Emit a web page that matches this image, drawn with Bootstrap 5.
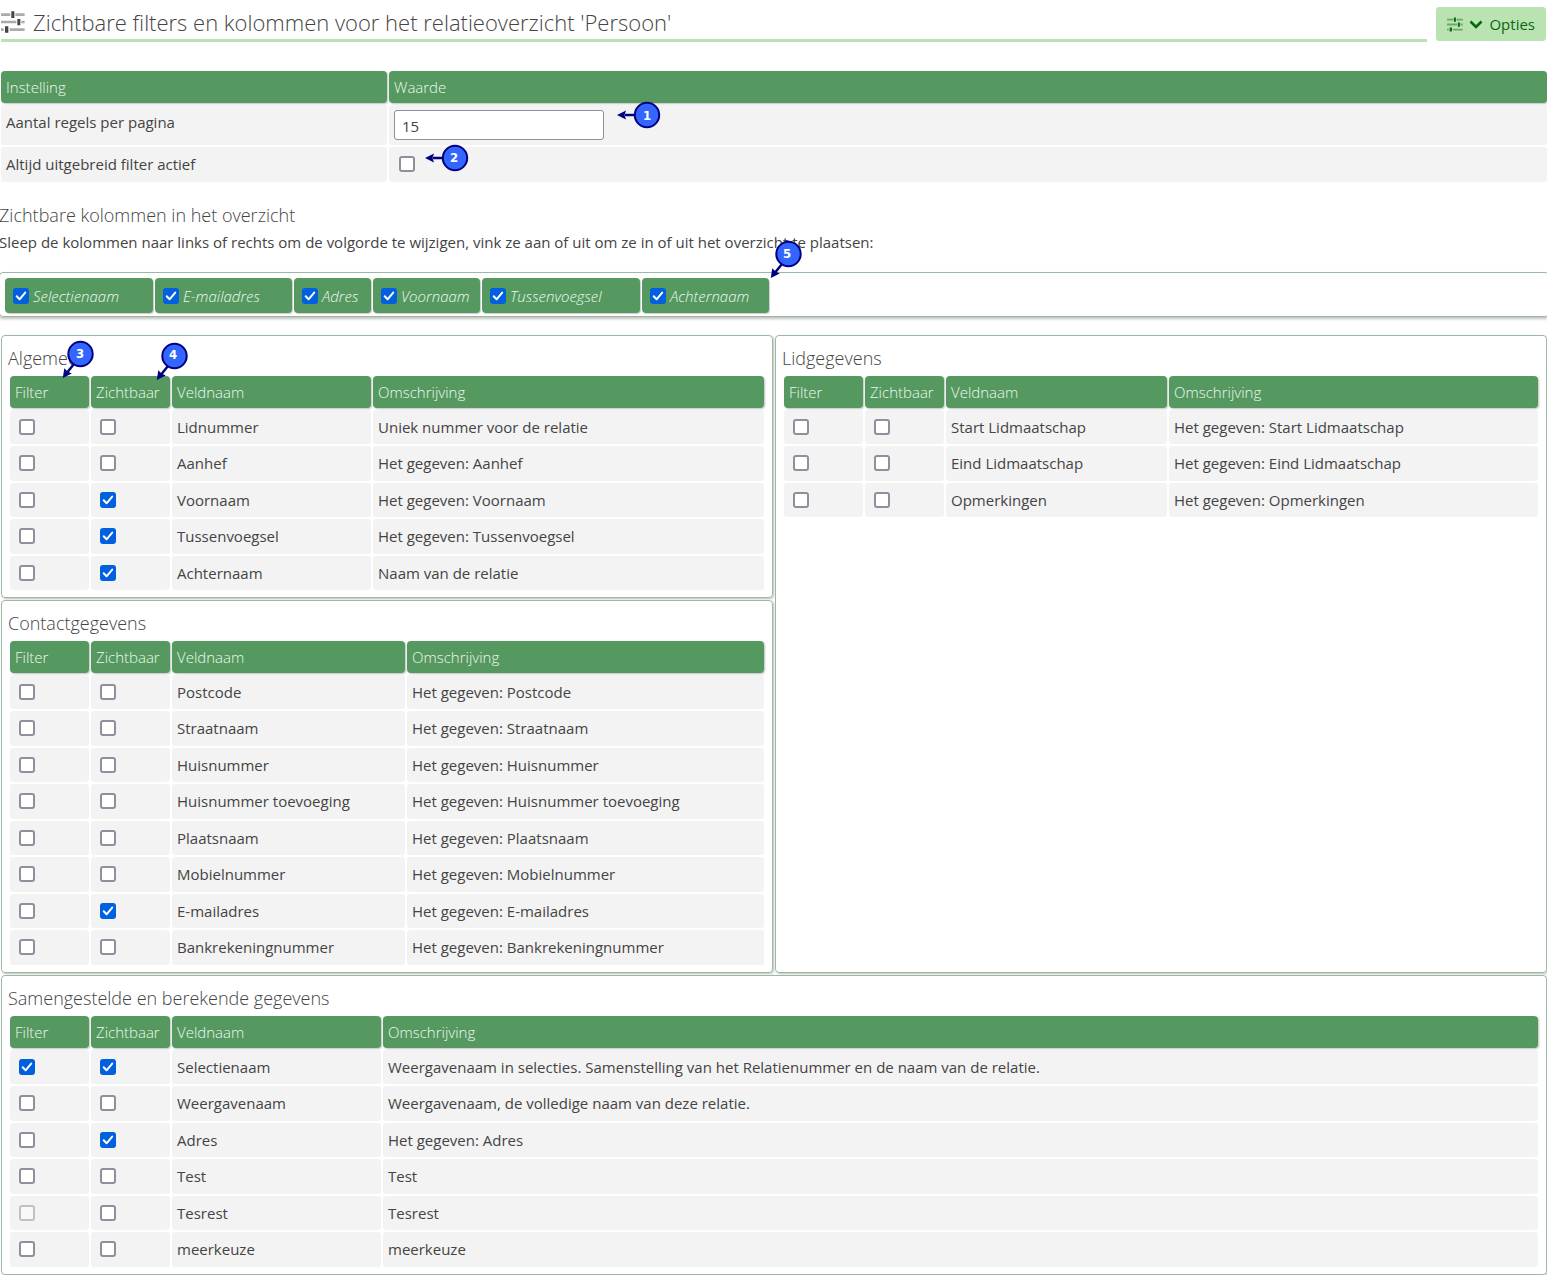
<!DOCTYPE html>
<html lang="nl">
<head>
<meta charset="utf-8">
<meta name="viewport" content="width=device-width, initial-scale=1">
<title>Zichtbare filters en kolommen</title>
<link href="https://cdn.jsdelivr.net/npm/bootstrap@5.3.0/dist/css/bootstrap.min.css" rel="stylesheet">
<style>
body{font:400 15px/20px "Open Sans","Noto Sans",sans-serif;color:#444;background:#fff;overflow-x:hidden}
.page{padding-left:1px}
.bleed{margin-left:-2px;margin-right:-2px}

/* page header */
.page-head{gap:9px;margin-bottom:27px;padding-right:1px}
.page-title{font-size:22px;line-height:30px;font-weight:300;color:#444;padding:7px 0 2px;border-bottom:3px solid #b9e4b2;gap:8px}
.btn-options{--bs-btn-bg:#b9e4b2;--bs-btn-color:#0b6410;--bs-btn-border-color:#b9e4b2;--bs-btn-hover-bg:#a8d8a0;--bs-btn-hover-color:#0b6410;--bs-btn-hover-border-color:#a8d8a0;--bs-btn-border-radius:3px;--bs-btn-font-size:15px;--bs-btn-line-height:20px;--bs-btn-padding-x:10px;--bs-btn-padding-y:6px;margin-top:7px;gap:6px}

/* grids */
.grid-table{width:100%;border-collapse:separate;border-spacing:2px;table-layout:fixed}
.grid-table th{background:#559960;color:#eef8ee;font-weight:300;padding:6px 5px;border-radius:4px;box-shadow:1px 1px 2px rgba(0,0,0,.25);position:relative}
.grid-table td{background:#f3f3f3;padding:7px 5px;border-radius:3px;height:34px;vertical-align:top;position:relative}
.grid-table tbody tr:nth-child(even) td{height:35px}
.grid-table .form-check-input{display:block;margin:2px 0 0 4px}
.grid-table td.input-cell{padding:5px}
.grid-table .form-check-input.wide-offset{margin-left:5px}
.col-setting{width:386px}
.col-check{width:79px}
.col-name-s{width:199px}
.col-name-m{width:209px}
.col-name-r{width:221px}
.col-name-l{width:233px}
.form-control{width:210px;height:30px;font-size:15px;line-height:20px;color:#444;border:1px solid #8f8f9d;border-radius:3px;padding:5px 7px 3px}

.form-check-input{width:16px;height:16px;margin:0;border:2px solid #8f8f9d;background-color:#fff;flex:none}
.form-check-input[type=checkbox]{border-radius:3px}
.form-check-input:checked{border-color:#0060df;background-color:#0060df;background-size:16px 16px;background-origin:border-box;background-image:url("data:image/svg+xml,%3csvg xmlns='http://www.w3.org/2000/svg' viewBox='0 0 16 16'%3e%3cpath fill='none' stroke='%23fff' stroke-width='2' stroke-linecap='round' stroke-linejoin='round' d='M3.7 8.3 6.6 11.3 12.2 4.6'/%3e%3c/svg%3e")}

/* column order bar */
.section-title{font-size:18px;line-height:24px;font-weight:300;color:#444;margin:19px 0 5px -2px}
.section-text{margin:0 0 20px -2px}
.order-bar{gap:2px;border:1px solid #9db8a2;border-radius:4px;padding:5px 5px 3px;box-shadow:0 2px 3px rgba(0,0,0,.25);margin-bottom:18px}
.order-item{height:35px;gap:4px;padding:0 8px;background:#559960;color:#eef8ee;font-style:italic;font-weight:300;border-radius:4px;box-shadow:1px 1px 1px rgba(0,0,0,.2);cursor:move}
.order-item label{padding-top:1px}
.w-chip-148{width:148px}
.w-chip-137{width:137px}
.w-chip-77{width:77px}
.w-chip-107{width:107px}
.w-chip-158{width:158px}
.w-chip-127{width:127px}

/* field groups */
.groups,.group-col{gap:2px}
.group-box{border:1px solid #9db8a2;border-radius:4px;padding:10px 6px 5px;box-shadow:1px 1px 2px rgba(0,0,0,.25)}
.group-title{font-size:18px;line-height:24px;font-weight:300;color:#444;margin:0 0 4px}

/* numbered callouts */
.callout{position:absolute;z-index:3;pointer-events:none}
.callout text{font:700 13px "DejaVu Sans Condensed","DejaVu Sans",sans-serif;fill:#fff;text-anchor:middle}
.callout-1{left:228px;top:-4px}
.callout-2{left:36px;top:-3px}
.callout-3{left:52px;top:-36px}
.callout-4{left:65px;top:-34px}
.callout-5{left:128px;top:-38px}
</style>
<script src="https://cdn.jsdelivr.net/npm/bootstrap@5.3.0/dist/js/bootstrap.bundle.min.js"></script>
</head>
<body>
<svg width="0" height="0" class="position-absolute" aria-hidden="true">
  <symbol id="sliders" viewBox="3 32 72 66">
    <path opacity=".45" fill="currentColor" d="M3 39h28v8H3zM46 39h28v8H46zM3 61h46v8H3zM64 61h10v8H64zM3 84h8v8H3zM29 84h45v8H29z"/>
    <path fill="currentColor" d="M34 33h9v20h-9zM52 56h9v19h-9zM15 78h10v19H15z"/>
  </symbol>
  <symbol id="pin-left" viewBox="0 0 44 28">
    <path d="M8 14H18" stroke="#000080" stroke-width="2.5"/><path fill="#000080" d="M0 14 9 9.5 7.500 14 9 18.500z"/>
    <circle cx="30" cy="14" r="12.200" fill="#36f" stroke="#000080" stroke-width="2"/>
  </symbol>
  <symbol id="pin-down" viewBox="0 0 34 40">
    <path d="M5.500 32 12 24" stroke="#000080" stroke-width="2.500"/><path fill="#000080" d="M.8 38 2.300 28.300 5.500 31.500 9.800 33.500z"/>
    <circle cx="18.500" cy="14" r="12.200" fill="#36f" stroke="#000080" stroke-width="2"/>
  </symbol>
</svg>

<main class="page">
  <header class="page-head d-flex align-items-start">
    <h1 class="page-title d-flex align-items-center flex-fill mb-0">
      <svg width="24" height="22" aria-hidden="true"><use href="#sliders"/></svg>
      <span>Zichtbare filters en kolommen voor het relatieoverzicht 'Persoon'</span>
    </h1>
    <button type="button" class="btn btn-options d-flex align-items-center">
      <svg width="16" height="15" aria-hidden="true"><use href="#sliders"/></svg>
      <svg width="14" height="9" viewBox="0 0 14 9" aria-hidden="true"><path d="M1.500 1.500 7 7l5.500-5.500" fill="none" stroke="currentColor" stroke-width="2.600"/></svg>
      <span>Opties</span>
    </button>
  </header>

  <div class="bleed">
    <table class="grid-table">
      <colgroup><col class="col-setting"><col></colgroup>
      <thead><tr><th>Instelling</th><th>Waarde</th></tr></thead>
      <tbody>
        <tr>
          <td><label for="rows">Aantal regels per pagina</label></td>
          <td class="input-cell"><input id="rows" type="text" class="form-control" value="15">
            <svg class="callout callout-1" width="44" height="28"><use href="#pin-left"/><text x="30" y="19">1</text></svg></td>
        </tr>
        <tr>
          <td><label for="ext">Altijd uitgebreid filter actief</label></td>
          <td><input id="ext" type="checkbox" class="form-check-input wide-offset">
            <svg class="callout callout-2" width="44" height="28"><use href="#pin-left"/><text x="29" y="18">2</text></svg></td>
        </tr>
      </tbody>
    </table>
  </div>

  <h2 class="section-title">Zichtbare kolommen in het overzicht</h2>
  <p class="section-text">Sleep de kolommen naar links of rechts om de volgorde te wijzigen, vink ze aan of uit om ze in of uit het overzicht te plaatsen:</p>

  <div class="order-bar bleed d-flex">
    <div class="order-item w-chip-148 d-flex align-items-center"><input class="form-check-input" type="checkbox" id="o1" checked><label for="o1">Selectienaam</label></div>
    <div class="order-item w-chip-137 d-flex align-items-center"><input class="form-check-input" type="checkbox" id="o2" checked><label for="o2">E-mailadres</label></div>
    <div class="order-item w-chip-77 d-flex align-items-center"><input class="form-check-input" type="checkbox" id="o3" checked><label for="o3">Adres</label></div>
    <div class="order-item w-chip-107 d-flex align-items-center"><input class="form-check-input" type="checkbox" id="o4" checked><label for="o4">Voornaam</label></div>
    <div class="order-item w-chip-158 d-flex align-items-center"><input class="form-check-input" type="checkbox" id="o5" checked><label for="o5">Tussenvoegsel</label></div>
    <div class="order-item w-chip-127 d-flex align-items-center position-relative"><input class="form-check-input" type="checkbox" id="o6" checked><label for="o6">Achternaam</label>
      <svg class="callout callout-5" width="34" height="40"><use href="#pin-down"/><text x="17" y="18">5</text></svg></div>
  </div>

  <div class="groups d-flex flex-column">
    <div class="groups d-flex">
      <div class="group-col d-flex flex-column w-50">
        <section class="group-box">
          <h2 class="group-title">Algemeen</h2>
          <table class="grid-table">
            <colgroup><col class="col-check"><col class="col-check"><col class="col-name-s"><col></colgroup>
            <thead><tr>
              <th>Filter<svg class="callout callout-3" width="34" height="40"><use href="#pin-down"/><text x="18" y="18">3</text></svg></th>
              <th>Zichtbaar<svg class="callout callout-4" width="34" height="40"><use href="#pin-down"/><text x="17" y="17">4</text></svg></th>
              <th>Veldnaam</th><th>Omschrijving</th></tr></thead>
            <tbody>
              <tr><td><input type="checkbox" class="form-check-input" aria-label="Filter Lidnummer"></td><td><input type="checkbox" class="form-check-input" aria-label="Zichtbaar Lidnummer"></td><td>Lidnummer</td><td>Uniek nummer voor de relatie</td></tr>
              <tr><td><input type="checkbox" class="form-check-input" aria-label="Filter Aanhef"></td><td><input type="checkbox" class="form-check-input" aria-label="Zichtbaar Aanhef"></td><td>Aanhef</td><td>Het gegeven: Aanhef</td></tr>
              <tr><td><input type="checkbox" class="form-check-input" aria-label="Filter Voornaam"></td><td><input type="checkbox" class="form-check-input" aria-label="Zichtbaar Voornaam" checked></td><td>Voornaam</td><td>Het gegeven: Voornaam</td></tr>
              <tr><td><input type="checkbox" class="form-check-input" aria-label="Filter Tussenvoegsel"></td><td><input type="checkbox" class="form-check-input" aria-label="Zichtbaar Tussenvoegsel" checked></td><td>Tussenvoegsel</td><td>Het gegeven: Tussenvoegsel</td></tr>
              <tr><td><input type="checkbox" class="form-check-input" aria-label="Filter Achternaam"></td><td><input type="checkbox" class="form-check-input" aria-label="Zichtbaar Achternaam" checked></td><td>Achternaam</td><td>Naam van de relatie</td></tr>
            </tbody>
          </table>
        </section>
        <section class="group-box">
          <h2 class="group-title">Contactgegevens</h2>
          <table class="grid-table">
            <colgroup><col class="col-check"><col class="col-check"><col class="col-name-l"><col></colgroup>
            <thead><tr><th>Filter</th><th>Zichtbaar</th><th>Veldnaam</th><th>Omschrijving</th></tr></thead>
            <tbody>
              <tr><td><input type="checkbox" class="form-check-input" aria-label="Filter Postcode"></td><td><input type="checkbox" class="form-check-input" aria-label="Zichtbaar Postcode"></td><td>Postcode</td><td>Het gegeven: Postcode</td></tr>
              <tr><td><input type="checkbox" class="form-check-input" aria-label="Filter Straatnaam"></td><td><input type="checkbox" class="form-check-input" aria-label="Zichtbaar Straatnaam"></td><td>Straatnaam</td><td>Het gegeven: Straatnaam</td></tr>
              <tr><td><input type="checkbox" class="form-check-input" aria-label="Filter Huisnummer"></td><td><input type="checkbox" class="form-check-input" aria-label="Zichtbaar Huisnummer"></td><td>Huisnummer</td><td>Het gegeven: Huisnummer</td></tr>
              <tr><td><input type="checkbox" class="form-check-input" aria-label="Filter Huisnummer toevoeging"></td><td><input type="checkbox" class="form-check-input" aria-label="Zichtbaar Huisnummer toevoeging"></td><td>Huisnummer toevoeging</td><td>Het gegeven: Huisnummer toevoeging</td></tr>
              <tr><td><input type="checkbox" class="form-check-input" aria-label="Filter Plaatsnaam"></td><td><input type="checkbox" class="form-check-input" aria-label="Zichtbaar Plaatsnaam"></td><td>Plaatsnaam</td><td>Het gegeven: Plaatsnaam</td></tr>
              <tr><td><input type="checkbox" class="form-check-input" aria-label="Filter Mobielnummer"></td><td><input type="checkbox" class="form-check-input" aria-label="Zichtbaar Mobielnummer"></td><td>Mobielnummer</td><td>Het gegeven: Mobielnummer</td></tr>
              <tr><td><input type="checkbox" class="form-check-input" aria-label="Filter E-mailadres"></td><td><input type="checkbox" class="form-check-input" aria-label="Zichtbaar E-mailadres" checked></td><td>E-mailadres</td><td>Het gegeven: E-mailadres</td></tr>
              <tr><td><input type="checkbox" class="form-check-input" aria-label="Filter Bankrekeningnummer"></td><td><input type="checkbox" class="form-check-input" aria-label="Zichtbaar Bankrekeningnummer"></td><td>Bankrekeningnummer</td><td>Het gegeven: Bankrekeningnummer</td></tr>
            </tbody>
          </table>
        </section>
      </div>
      <section class="group-box w-50">
        <h2 class="group-title">Lidgegevens</h2>
        <table class="grid-table">
          <colgroup><col class="col-check"><col class="col-check"><col class="col-name-r"><col></colgroup>
          <thead><tr><th>Filter</th><th>Zichtbaar</th><th>Veldnaam</th><th>Omschrijving</th></tr></thead>
          <tbody>
            <tr><td><input type="checkbox" class="form-check-input" aria-label="Filter Start Lidmaatschap"></td><td><input type="checkbox" class="form-check-input" aria-label="Zichtbaar Start Lidmaatschap"></td><td>Start Lidmaatschap</td><td>Het gegeven: Start Lidmaatschap</td></tr>
            <tr><td><input type="checkbox" class="form-check-input" aria-label="Filter Eind Lidmaatschap"></td><td><input type="checkbox" class="form-check-input" aria-label="Zichtbaar Eind Lidmaatschap"></td><td>Eind Lidmaatschap</td><td>Het gegeven: Eind Lidmaatschap</td></tr>
            <tr><td><input type="checkbox" class="form-check-input" aria-label="Filter Opmerkingen"></td><td><input type="checkbox" class="form-check-input" aria-label="Zichtbaar Opmerkingen"></td><td>Opmerkingen</td><td>Het gegeven: Opmerkingen</td></tr>
          </tbody>
        </table>
      </section>
    </div>
    <section class="group-box">
      <h2 class="group-title">Samengestelde en berekende gegevens</h2>
      <table class="grid-table">
        <colgroup><col class="col-check"><col class="col-check"><col class="col-name-m"><col></colgroup>
        <thead><tr><th>Filter</th><th>Zichtbaar</th><th>Veldnaam</th><th>Omschrijving</th></tr></thead>
        <tbody>
          <tr><td><input type="checkbox" class="form-check-input" aria-label="Filter Selectienaam" checked></td><td><input type="checkbox" class="form-check-input" aria-label="Zichtbaar Selectienaam" checked></td><td>Selectienaam</td><td>Weergavenaam in selecties. Samenstelling van het Relatienummer en de naam van de relatie.</td></tr>
          <tr><td><input type="checkbox" class="form-check-input" aria-label="Filter Weergavenaam"></td><td><input type="checkbox" class="form-check-input" aria-label="Zichtbaar Weergavenaam"></td><td>Weergavenaam</td><td>Weergavenaam, de volledige naam van deze relatie.</td></tr>
          <tr><td><input type="checkbox" class="form-check-input" aria-label="Filter Adres"></td><td><input type="checkbox" class="form-check-input" aria-label="Zichtbaar Adres" checked></td><td>Adres</td><td>Het gegeven: Adres</td></tr>
          <tr><td><input type="checkbox" class="form-check-input" aria-label="Filter Test"></td><td><input type="checkbox" class="form-check-input" aria-label="Zichtbaar Test"></td><td>Test</td><td>Test</td></tr>
          <tr><td><input type="checkbox" class="form-check-input" aria-label="Filter Tesrest" disabled></td><td><input type="checkbox" class="form-check-input" aria-label="Zichtbaar Tesrest"></td><td>Tesrest</td><td>Tesrest</td></tr>
          <tr><td><input type="checkbox" class="form-check-input" aria-label="Filter meerkeuze"></td><td><input type="checkbox" class="form-check-input" aria-label="Zichtbaar meerkeuze"></td><td>meerkeuze</td><td>meerkeuze</td></tr>
        </tbody>
      </table>
    </section>
  </div>
</main>
</body>
</html>
